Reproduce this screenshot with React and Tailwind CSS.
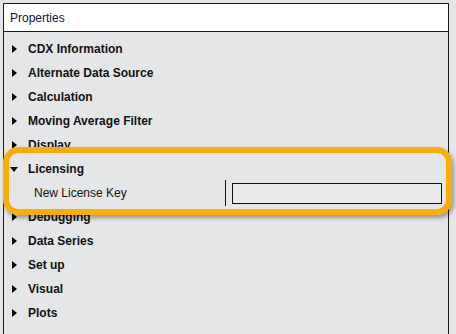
import React from "react";

function Right() {
  return (
    <svg width="5" height="8" viewBox="0 0 5 8" className="shrink-0">
      <path d="M0 0 L5 4 L0 8 Z" fill="#000" />
    </svg>
  );
}
function Down() {
  return (
    <svg width="8" height="5" viewBox="0 0 8 5" className="shrink-0">
      <path d="M0 0 L8 0 L4 5 Z" fill="#000" />
    </svg>
  );
}

function Row({ label, open }) {
  return (
    <div className="h-[24px] flex items-center">
      {open ? (
        <div className="pl-[6px] w-[24px] flex"><Down /></div>
      ) : (
        <div className="pl-[8px] w-[24px] flex"><Right /></div>
      )}
      <span className="font-bold text-[12px] text-[#111]">{label}</span>
    </div>
  );
}

export default function App() {
  const before = ["CDX Information", "Alternate Data Source", "Calculation", "Moving Average Filter", "Display"];
  const after = ["Debugging", "Data Series", "Set up", "Visual", "Plots"];
  return (
    <div className="relative w-[456px] h-[334px] bg-[#e5e6e8] overflow-hidden pt-[3px] pl-[3px]" style={{ fontFamily: '"Liberation Sans", Arial, sans-serif' }}>
      <div className="w-[446px] h-[340px] border border-b-0 border-[#1a1a1a] bg-[#e5e6e8]">
        <div className="h-[28px] bg-white border-b border-[#1a1a1a] flex items-center pl-[6px] text-[12px] text-[#14143a]">
          Properties
        </div>
        <div className="pt-[5px]">
          {before.map((l) => <Row key={l} label={l} />)}
          <Row label="Licensing" open />
          <div className="h-[24px] flex items-center">
            <span className="pl-[30px] w-[221px] text-[12px] text-[#111]">New License Key</span>
            <div className="w-[1px] h-[26px] bg-[#111]" />
            <div className="ml-[6px] w-[210px] h-[21px] border border-[#111] bg-[#e9eaea]" />
          </div>
          {after.map((l) => <Row key={l} label={l} />)}
        </div>
      </div>
      <div className="absolute left-[3px] top-[147px] w-[449px] h-[68px] rounded-[15px] border-[6px] border-[#f9ad0b] shadow-[2px_3px_4px_rgba(0,0,0,0.35)]" />
    </div>
  );
}
